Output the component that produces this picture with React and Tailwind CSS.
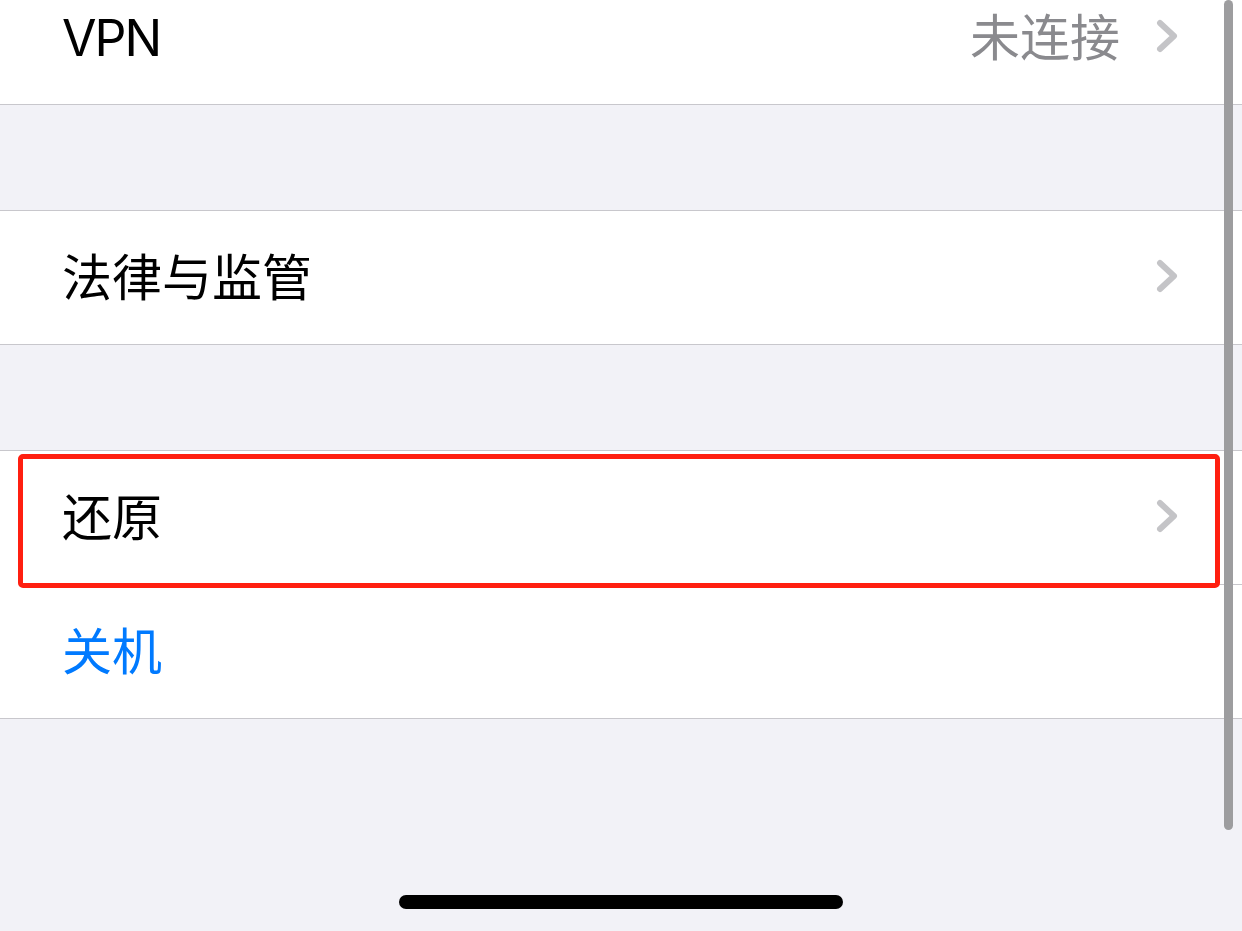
import React from 'react';

// grey disclosure arrow used on each row
function Chevron() {
  return (
    <svg width="24" height="34" viewBox="0 0 24 34" className="shrink-0 -mt-[4px]">
      <polyline
        points="4,4 18,17 4,30"
        fill="none"
        stroke="#c4c4c7"
        strokeWidth="6"
        strokeLinecap="round"
        strokeLinejoin="round"
      />
    </svg>
  );
}

function Row({ label, value, blue, chevron = true, tight, children }) {
  return (
    <div className="relative h-[133px] bg-white flex items-center pl-[62px] pr-[62px]">
      <span
        className={`text-[50px] leading-none ${blue ? 'text-[#007aff]' : 'text-black'} ${
          tight ? 'tracking-[-2px]' : ''
        }`}
      >
        {label}
      </span>
      <div className="flex-1" />
      {value && (
        <span className="text-[50px] leading-none text-[#8a8a8e] mr-[36px]">{value}</span>
      )}
      {chevron && <Chevron />}
      {children}
    </div>
  );
}

export default function App() {
  return (
    <div className="relative w-full h-[931px] overflow-hidden bg-[#f2f2f7] font-['Inter','Noto_Sans_CJK_SC',sans-serif]">
      <div className="flex flex-col mt-[-29px]">
        <div className="border-b border-[#c8c7cc]">
          <Row label="VPN" value="未连接" tight />
        </div>

        <div className="h-[105px]" />

        <div className="border-y border-[#c8c7cc]">
          <Row label="法律与监管" />
        </div>

        <div className="h-[105px]" />

        <div className="border-y border-[#c8c7cc] bg-white">
          <Row label="还原">
            {/* red highlight frame */}
            <div className="absolute left-[18px] top-[3px] w-[1202px] h-[134px] border-[5px] border-[#ff1f10] rounded-[5px] z-10" />
          </Row>
          <div className="ml-[62px] h-px bg-[#c8c7cc]" />
          <Row label="关机" blue chevron={false} />
        </div>
      </div>

      {/* scroll indicator */}
      <div className="absolute left-[1224px] top-0 w-[9px] h-[830px] rounded-full bg-[#9d9d9f]" />

      {/* home indicator */}
      <div className="absolute bottom-[22px] left-1/2 -translate-x-1/2 w-[444px] h-[14px] rounded-full bg-black" />
    </div>
  );
}
